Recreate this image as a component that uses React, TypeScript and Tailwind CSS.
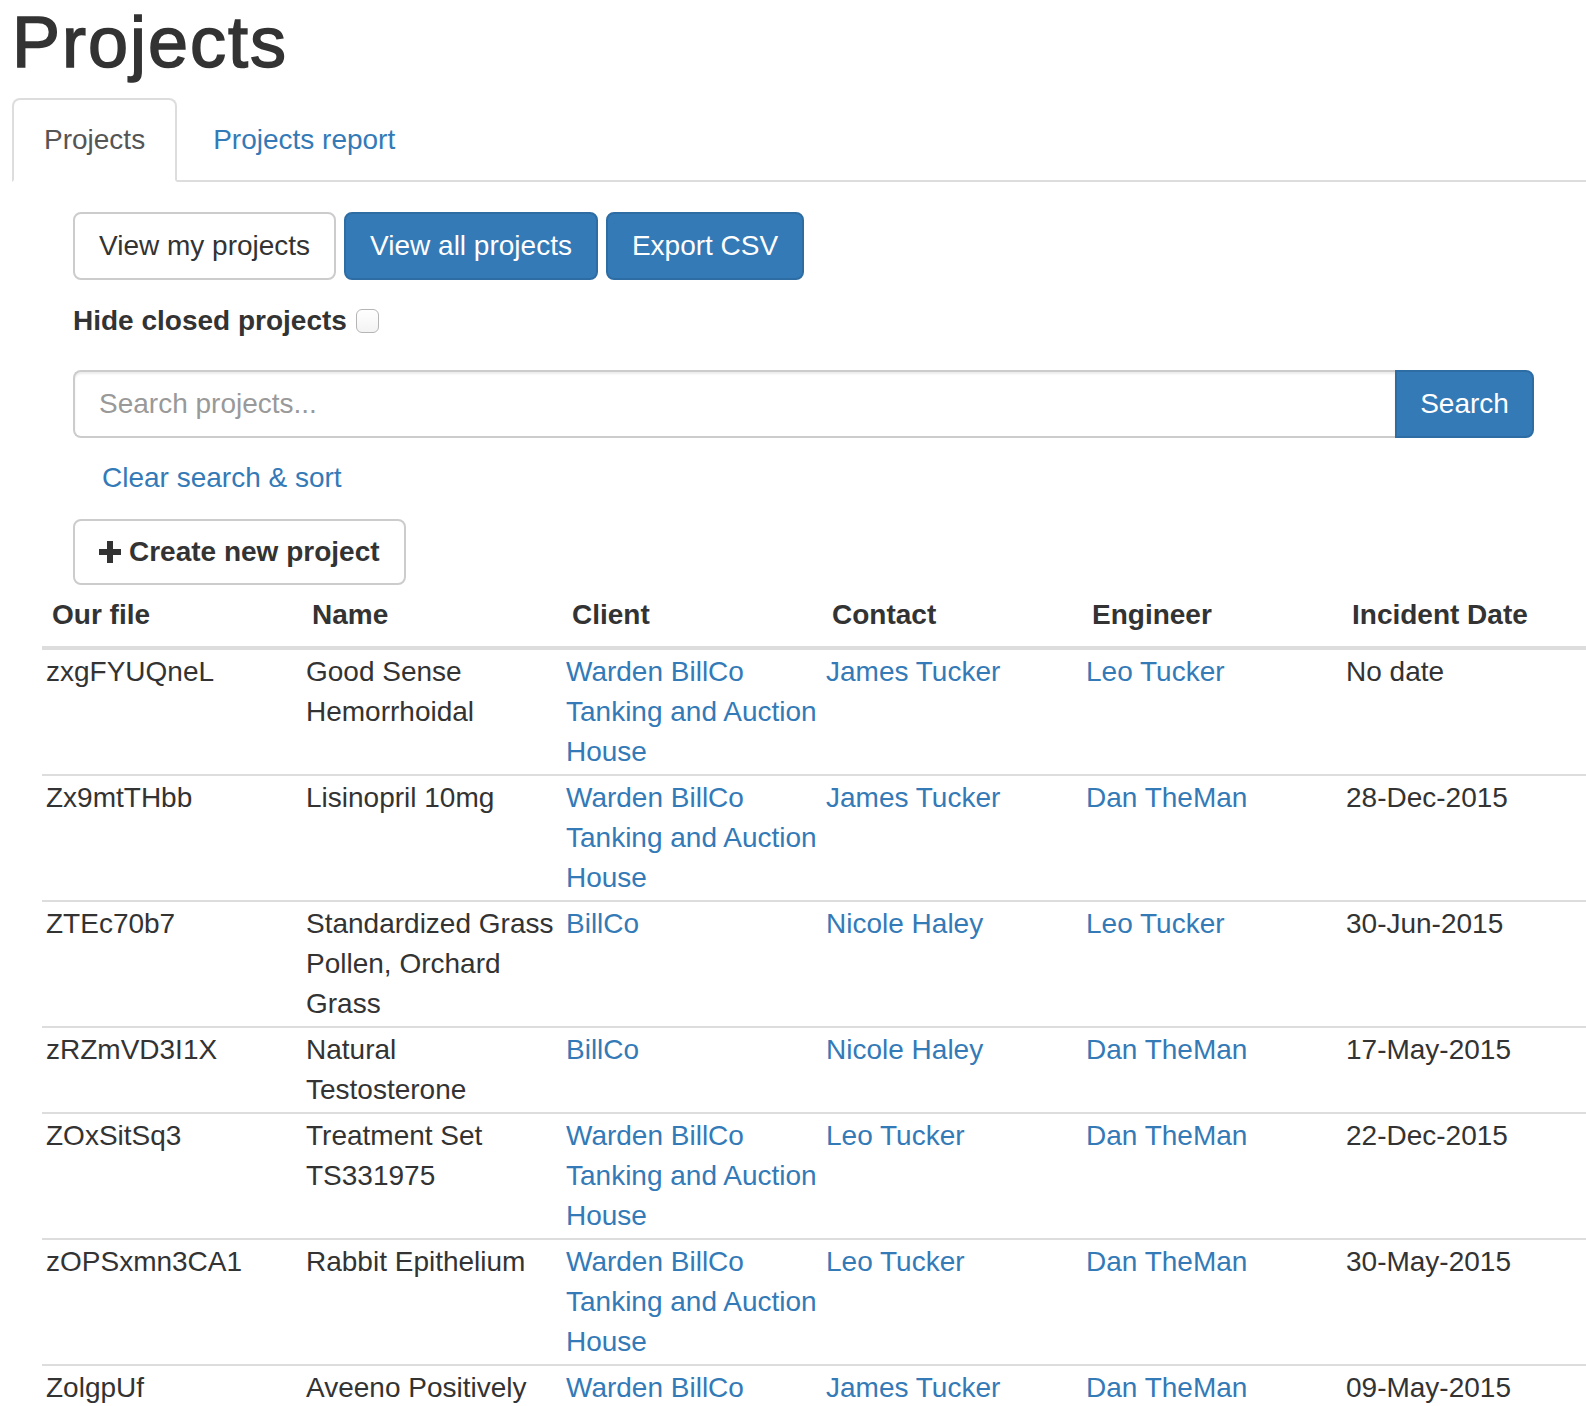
type Row = {
  file: string;
  name: string;
  clients: string[];
  contact: string;
  engineer: string;
  date: string;
};

const rows: Row[] = [
  {
    file: "zxgFYUQneL",
    name: "Good Sense Hemorrhoidal",
    clients: ["Warden BillCo", "Tanking and Auction House"],
    contact: "James Tucker",
    engineer: "Leo Tucker",
    date: "No date",
  },
  {
    file: "Zx9mtTHbb",
    name: "Lisinopril 10mg",
    clients: ["Warden BillCo", "Tanking and Auction House"],
    contact: "James Tucker",
    engineer: "Dan TheMan",
    date: "28-Dec-2015",
  },
  {
    file: "ZTEc70b7",
    name: "Standardized Grass Pollen, Orchard Grass",
    clients: ["BillCo"],
    contact: "Nicole Haley",
    engineer: "Leo Tucker",
    date: "30-Jun-2015",
  },
  {
    file: "zRZmVD3I1X",
    name: "Natural Testosterone",
    clients: ["BillCo"],
    contact: "Nicole Haley",
    engineer: "Dan TheMan",
    date: "17-May-2015",
  },
  {
    file: "ZOxSitSq3",
    name: "Treatment Set TS331975",
    clients: ["Warden BillCo", "Tanking and Auction House"],
    contact: "Leo Tucker",
    engineer: "Dan TheMan",
    date: "22-Dec-2015",
  },
  {
    file: "zOPSxmn3CA1",
    name: "Rabbit Epithelium",
    clients: ["Warden BillCo", "Tanking and Auction House"],
    contact: "Leo Tucker",
    engineer: "Dan TheMan",
    date: "30-May-2015",
  },
  {
    file: "ZolgpUf",
    name: "Aveeno Positively Radiant Daily Moisturizer",
    clients: ["Warden BillCo", "Tanking and Auction House"],
    contact: "James Tucker",
    engineer: "Dan TheMan",
    date: "09-May-2015",
  },
];

const headers = ["Our file", "Name", "Client", "Contact", "Engineer", "Incident Date"];

function PlusIcon() {
  return (
    <svg width="22" height="22" viewBox="0 0 22 22" className="mr-[8px] shrink-0">
      <rect x="8" y="0" width="6" height="22" fill="#333" />
      <rect x="0" y="8" width="22" height="6" fill="#333" />
    </svg>
  );
}

export default function App() {
  return (
    <div className="h-[1406px] w-full overflow-hidden bg-white font-['Liberation_Sans',Arial,sans-serif] text-[28px] leading-[40px] text-[#333]">
      <div className="pl-[12px] pt-[2px]">
        <h1 className="text-[72px] font-normal leading-[80px] tracking-[2px] [-webkit-text-stroke:1.6px_#333]">
          Projects
        </h1>

        {/* tabs */}
        <ul className="mt-[16px] flex border-b-2 border-[#ddd]">
          <li className="-mb-[2px] mr-[4px]">
            <a className="block rounded-t-[8px] border-2 border-[#ddd] border-b-transparent bg-white px-[30px] py-[20px] text-[#555]">
              Projects
            </a>
          </li>
          <li className="-mb-[2px]">
            <a className="block border-2 border-transparent px-[30px] py-[20px] text-[#337ab7]">Projects report</a>
          </li>
        </ul>

        <div className="ml-[61px] w-[1461px]">
          <div className="mt-[30px] flex gap-[8px]">
            <button className="h-[68px] rounded-[8px] border-2 border-[#ccc] bg-white px-[24px] text-[#333]">
              View my projects
            </button>
            <button className="h-[68px] rounded-[8px] border-2 border-[#2e6da4] bg-[#337ab7] px-[24px] text-white">
              View all projects
            </button>
            <button className="h-[68px] rounded-[8px] border-2 border-[#2e6da4] bg-[#337ab7] px-[24px] text-white">
              Export CSV
            </button>
          </div>

          <label className="mt-[21px] flex h-[40px] items-center font-bold">
            Hide closed projects
            <span className="ml-[9px] h-[24px] w-[23px] rounded-[6px] border-[1.5px] border-[#b5b5b5] bg-gradient-to-b from-white to-[#f3f3f3]"></span>
          </label>

          <div className="mt-[29px] flex h-[68px]">
            <div className="flex flex-1 items-center rounded-l-[8px] border-2 border-r-0 border-[#ccc] px-[24px] text-[#999] shadow-[inset_0_2px_2px_rgba(0,0,0,0.075)]">
              Search projects...
            </div>
            <button className="w-[139px] rounded-r-[8px] border-2 border-[#2e6da4] bg-[#337ab7] text-white">Search</button>
          </div>

          <div className="mt-[20px] pl-[29px] text-[#337ab7]">Clear search &amp; sort</div>

          <button className="mt-[21px] flex h-[66px] items-center rounded-[8px] border-2 border-[#ccc] bg-white px-[24px] font-bold text-[#333]">
            <PlusIcon />
            Create new project
          </button>
        </div>

        {/* table */}
        <div className="ml-[30px] w-[1560px]">
          <div className="grid grid-cols-[repeat(6,260px)] border-b-4 border-[#ddd]">
            {headers.map((h) => (
              <div key={h} className="px-[10px] pb-[11px] pt-[10px] font-bold">
                {h}
              </div>
            ))}
          </div>
          {rows.map((r, i) => (
            <div
              key={r.file}
              className={`grid grid-cols-[repeat(6,260px)] ${i > 0 ? "border-t-2 border-[#ddd]" : ""}`}
            >
              <div className="py-[2px] pl-[4px]">{r.file}</div>
              <div className="py-[2px] pl-[4px]">{r.name}</div>
              <div className="py-[2px] pl-[4px] text-[#337ab7]">
                {r.clients.map((c) => (
                  <div key={c}>{c}</div>
                ))}
              </div>
              <div className="py-[2px] pl-[4px] text-[#337ab7]">{r.contact}</div>
              <div className="py-[2px] pl-[4px] text-[#337ab7]">{r.engineer}</div>
              <div className="py-[2px] pl-[4px]">{r.date}</div>
            </div>
          ))}
        </div>
      </div>
    </div>
  );
}
